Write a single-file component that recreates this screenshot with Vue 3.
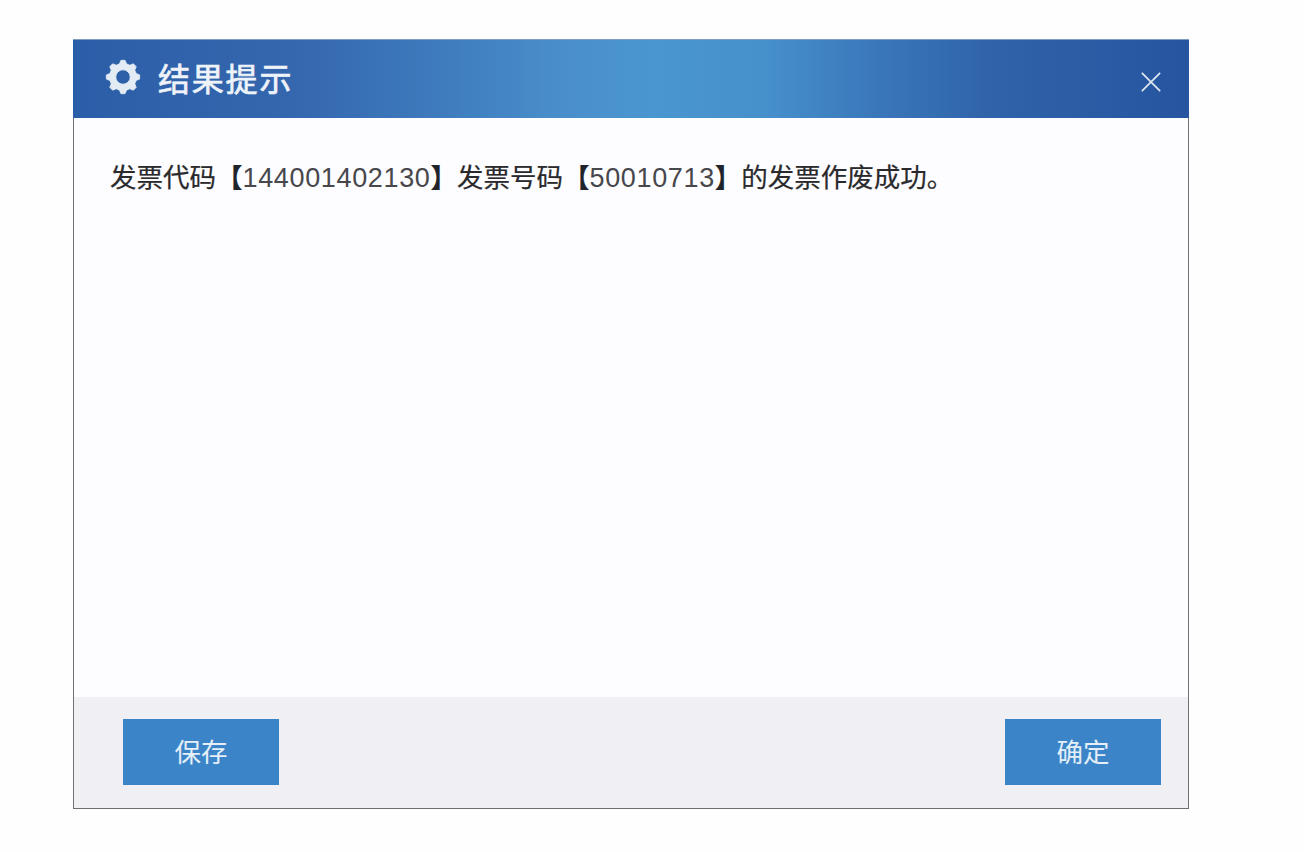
<template>
  <div class="page">
    <section class="dialog">
      <header class="dialog__head">
        <div class="dialog__title">
          <svg class="gear" viewBox="0 0 36 36" aria-hidden="true">
            <path :d="gearPath" fill-rule="evenodd" />
          </svg>
          <span>结果提示</span>
        </div>
        <svg class="close" viewBox="0 0 24 24" aria-hidden="true">
          <path d="M2 2 22 22M22 2 2 22" />
        </svg>
      </header>

      <div class="dialog__body">
        <p class="message">
          发票代码<span class="bracket">【</span><span class="num">144001402130</span><span class="bracket">】</span>发票号码<span class="bracket">【</span><span class="num">50010713</span><span class="bracket">】</span>的发票作废成功。
        </p>
      </div>

      <footer class="dialog__foot">
        <button class="btn" type="button">保存</button>
        <button class="btn" type="button">确定</button>
      </footer>
    </section>
  </div>
</template>

<script setup>
// 8 dientes: contorno exterior + agujero central
const point = (radius, deg) => {
  const a = (deg * Math.PI) / 180
  return `${(18 + radius * Math.sin(a)).toFixed(2)} ${(18 - radius * Math.cos(a)).toFixed(2)}`
}

const teeth = []
for (let i = 0; i < 8; i++) {
  const c = i * 45
  teeth.push(point(13.6, c - 15), point(16.8, c - 7), point(16.8, c + 7), point(13.6, c + 15))
}

const gearPath = `M${teeth.join('L')}Z M18 10.8a7.2 7.2 0 1 0 0 14.400a7.2 7.2 0 1 0 0-14.400Z`
</script>

<style scoped>
.page {
  box-sizing: border-box;
  width: 1304px;
  height: 852px;
  padding: 39px 0 0 73px;
  background: #fefeff;
  font-family: "Noto Sans CJK SC", "Liberation Sans", sans-serif;
}

.dialog {
  box-sizing: border-box;
  display: flex;
  flex-direction: column;
  width: 1116px;
  height: 770px;
  border: 1px solid #6f7072;
  border-top: 0;
  background: #fdfdff;
}

/* ==== HEADER ==== */
.dialog__head {
  box-sizing: border-box;
  flex: 0 0 79px;
  margin: 0 -1px;
  display: flex;
  align-items: center;
  justify-content: space-between;
  padding: 0 27px 0 32px;
  border-top: 1px solid #7f9cc0;
  background: linear-gradient(90deg, #2b5ea8 0%, #3567ae 20%, #3f7dbf 34%, #4a8fcb 44%, #4a96d0 52%, #4690cc 62%, #3a77ba 72%, #2f62a8 83%, #2755a0 100%);
  color: #eef3f9;
}

.dialog__title {
  display: flex;
  align-items: center;
  gap: 17px;
  margin-top: -5px;
  font-size: 32px;
  line-height: 1;
  letter-spacing: 1.8px;
  -webkit-text-stroke: 0.7px #eef3f9;
}

.gear {
  width: 36px;
  height: 36px;
  fill: #e3ebf4;
  stroke: #e3ebf4;
  stroke-width: 0.8;
  stroke-linejoin: round;
}

.close {
  width: 22px;
  height: 22px;
  margin-top: 6px;
  fill: none;
  stroke: #dfe9f2;
  stroke-width: 1.8;
}

/* ==== BODY ==== */
.dialog__body {
  flex: 1;
  padding: 40px 36px 0;
}

.message {
  margin: 0;
  font-size: 26.5px;
  line-height: 36px;
  color: #2a2a2c;
  white-space: nowrap;
  -webkit-text-stroke: 0.2px #2a2a2c;
}

.bracket {
  font-weight: 700;
  color: #20242a;
}

.num {
  font-family: "Liberation Sans", sans-serif;
  font-size: 27px;
  letter-spacing: 0.65px;
  color: #47474c;
  -webkit-text-stroke: 0;
}

/* ==== FOOTER ==== */
.dialog__foot {
  flex: 0 0 111px;
  box-sizing: border-box;
  display: flex;
  justify-content: space-between;
  align-items: flex-start;
  padding: 22px 27px 0 49px;
  background: #f0f0f4;
}

.btn {
  width: 156px;
  height: 66px;
  padding: 0 0 4px;
  border: 0;
  background: #3b84c8;
  color: #e4eff8;
  font-family: inherit;
  font-size: 26.5px;
}
</style>
